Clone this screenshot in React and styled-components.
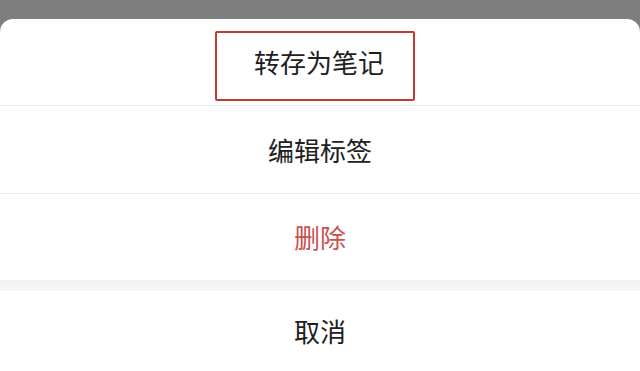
import React from 'react';
import styled, { createGlobalStyle } from 'styled-components';

const GlobalStyle = createGlobalStyle`
  html, body {
    margin: 0;
    padding: 0;
    background: #7f7f7f;
    overflow: hidden;
  }
  body {
    font-family: "Noto Sans CJK SC", "Noto Sans", sans-serif;
  }
`;

const Screen = styled.div`
  width: 640px;
  height: 371px;
  display: flex;
  flex-direction: column;
  padding-top: 19px;
  box-sizing: border-box;
`;

const Sheet = styled.div`
  flex: 1;
  display: flex;
  flex-direction: column;
  background: #ffffff;
  border-radius: 13px 13px 0 0;
  overflow: hidden;
`;

const Row = styled.div`
  height: ${p => p.height || 86}px;
  flex-shrink: 0;
  display: flex;
  align-items: center;
  justify-content: center;
  box-sizing: border-box;
  border-bottom: ${p => (p.divider ? '1px solid #ebebeb' : 'none')};
  font-size: 26px;
  line-height: 26px;
  color: ${p => (p.danger ? '#c9514e' : '#202020')};
`;

const HighlightRow = styled(Row)`
  align-items: flex-start;
  padding-top: 12px;
`;

const Highlight = styled.div`
  display: inline-flex;
  padding: 16px 29px 24px 37px;
  margin-right: 10px;
  border: 2px solid #c8392e;
  border-radius: 2px;
`;

const Gap = styled.div`
  height: 11px;
  flex-shrink: 0;
  background: linear-gradient(#f1f1f1, #f7f7f7);
`;

export default function App() {
  return (
    <>
      <GlobalStyle />
      <Screen>
        <Sheet>
          <HighlightRow divider height={87}>
            <Highlight>转存为笔记</Highlight>
          </HighlightRow>
          <Row divider height={88}>编辑标签</Row>
          <Row danger height={86}>删除</Row>
          <Gap />
          <Row height={80}>取消</Row>
        </Sheet>
      </Screen>
    </>
  );
}
